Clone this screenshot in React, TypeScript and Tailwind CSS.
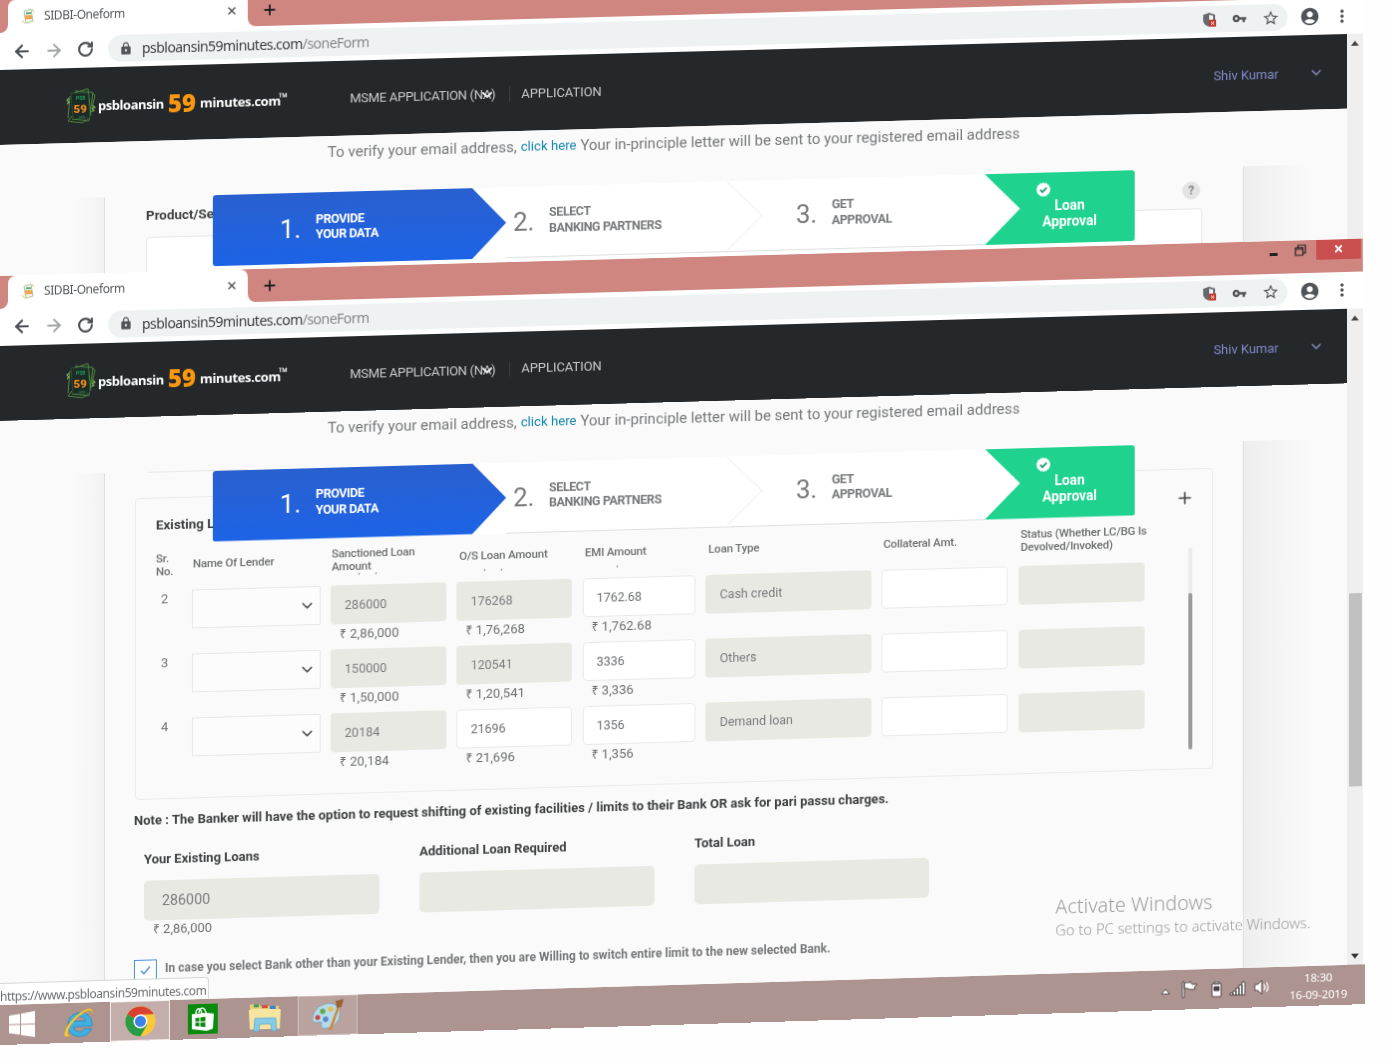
import React from "react";
import { ArrowLeft, ArrowRight, RotateCw, ChevronDown, Plus, X } from "lucide-react";
import { MdLock, MdVpnKey, MdStarOutline, MdAccountCircle, MdMoreVert } from "react-icons/md";

function NotesLogo({ className, small }: { className: string; small?: boolean }) {
  return small ? (
    <svg viewBox="0 0 14 16" className={className} fill="none">
      <path d="M3 3l7-2 2 12-7 2z" fill="#f3f6ee" stroke="#a9c79a" />
      <path d="M1 12l3 3M11 1l2 3" stroke="#d8c25a" />
      <path d="M5 4h5v2H5z" fill="#5fae82" />
      <path d="M4 7h7v4H4z" fill="#f0a64e" />
    </svg>
  ) : (
    <svg viewBox="0 0 30 36" className={className} fill="none">
      <path d="M9 3l18 2-4 28-17-2M5 6L22 1l3 27M6 28l-4 5 14 2 6-3M4 8l-2 22M27 6l2 2-3 12" stroke="#4c8a3c" strokeWidth="1" />
      <path d="M5 5h17l2 25-17 1z" fill="#1c2b25" stroke="#2d5a3a" strokeWidth=".7" />
      <path d="M3 10l-2 2 2 2-2 2M27 18l2 2-3 1 2 2-3 1" stroke="#86b35a" strokeWidth="1.1" />
      <text x="10" y="12.500" fontSize="5" fontWeight="700" fontFamily="Roboto, sans-serif" fill="#1f9a5a">PSB</text>
      <text x="7.500" y="24.800" fontSize="11.500" fontWeight="900" fontFamily="Roboto, sans-serif" fill="#f08a1c">59</text>
      <path d="M13 29h6" stroke="#2e7a48" />
    </svg>
  );
}

function TitleBar() {
  return (
    <div className="flex h-[33px] shrink-0 bg-white">
      <div className="w-2 rounded-br-lg bg-[#cf8680]" />
      <div className="w-[240px] bg-[#cf8680]">
        <div className="flex h-full items-center rounded-t-lg bg-white pl-[13px] pr-2.5">
          <NotesLogo small className="h-4 w-[14px]" />
          <span className="ml-[9px] whitespace-nowrap font-['Noto_Sans'] text-[12px] tracking-[-0.42px] text-[#55585c]">SIDBI-Oneform</span>
          <X className="ml-auto size-3 text-[#55585c]" strokeWidth={3} />
        </div>
      </div>
      <div className="flex flex-1 items-start rounded-bl-lg bg-[#cf8680] pl-[14px]">
        <Plus className="mt-[9px] size-4 text-[#222]" strokeWidth={2.8} />
        <div className="ml-auto flex h-5 items-center">
          <div className="mt-2 h-[3px] w-2 bg-[#222]" />
          <svg viewBox="0 0 12 12" className="ml-[17px] size-3" fill="none" stroke="#222" strokeWidth="1.2">
            <path d="M3.500 3V1H11v8H9M1 3.500h7.500V11H1zM1 5h7.500" />
          </svg>
          <div className="ml-[10px] mr-0.5 flex h-5 w-[45px] items-center justify-center bg-[#c94e4e]">
            <X className="size-[11px] text-white" strokeWidth={4} />
          </div>
        </div>
      </div>
    </div>
  );
}

function Toolbar() {
  return (
    <div className="flex h-[37px] shrink-0 items-center bg-white pl-3">
      <ArrowLeft className="size-5 text-[#4c4f53]" strokeWidth={2.6} />
      <ArrowRight className="ml-3 size-5 text-[#a4a6a8]" strokeWidth={2.4} />
      <RotateCw className="ml-[13px] size-[17px] text-[#4c4f53]" strokeWidth={3} />
      <div className="ml-[14px] flex h-[27px] w-[1185px] items-center rounded-full bg-[#eff2f3] pl-[11px] pr-2">
        <MdLock className="size-[14px] text-[#505357]" />
        <span className="ml-[9px] whitespace-nowrap font-['Noto_Sans'] text-[14px] tracking-[-0.54px] text-[#3c4043]">
          psbloansin59minutes.com<span className="text-[#85888c]">/soneForm</span>
        </span>
        <svg viewBox="0 0 16 16" className="ml-auto size-4">
          <path d="M7 1l6 2v5c0 4-3 6-6 7-3-1-6-3-6-7V3z" fill="#66696d" />
          <path d="M7 3l4 1v5H7z" fill="#f1f3f4" />
          <path d="M7 8h7v7H7z" fill="#c73a31" />
          <path d="M9 10l3 3m0-3l-3 3" stroke="#fff" />
        </svg>
        <MdVpnKey className="ml-[14px] size-[15px] text-[#55585c]" />
        <MdStarOutline className="ml-[15px] size-[18px] text-[#55585c]" />
      </div>
      <MdAccountCircle className="ml-[12px] size-[21px] text-[#505357]" />
      <MdMoreVert className="ml-3 size-5 text-[#505357]" />
    </div>
  );
}

function Nav() {
  return (
    <div className="flex h-[75px] shrink-0 items-center bg-[#25282a] text-white">
      <NotesLogo className="ml-[66px] h-9 w-[30px]" />
      <div className="ml-[2px] flex h-8 items-center whitespace-nowrap font-['Open_Sans'] font-bold">
        <span className="w-[70px] pt-[3px] text-[13px] tracking-[-0.45px]">psbloansin</span>
        <span className="w-[32px] font-['Noto_Sans'] text-[24px] font-black text-[#f9980f]">59</span>
        <span className="w-[79px] pt-[3px] text-[13px] tracking-[-0.35px]">minutes.com</span>
        <span className="mb-1.5 text-[12px]">™</span>
      </div>
      <div className="relative ml-[62px] w-[151px] whitespace-nowrap pt-px text-[13px] tracking-[-0.3px] text-[#c9cacb]">
        MSME APPLICATION (NA)
        <ChevronDown className="absolute left-[130px] top-[3px] size-4 text-[#e8e8e8]" strokeWidth={3} />
      </div>
      <div className="ml-[9px] h-4 w-px bg-[#3a3d40]" />
      <div className="ml-[11px] text-[13px] tracking-[-0.05px] text-[#c9cacb]">APPLICATION</div>
      <div className="ml-auto pt-0.5 text-[13px] text-[#8089c9]">Shiv Kumar</div>
      <ChevronDown className="ml-[30px] mr-[23px] size-4 text-[#8c92c4]" strokeWidth={2} />
    </div>
  );
}

function VerifyLine() {
  return (
    <div className="flex items-center whitespace-nowrap pl-[328px] pt-[4px] text-[15px] leading-[24px] text-[#757779]">
      <span>To verify your email address,</span>
      <span className="ml-1 text-[13.2px] text-[#1287ad]">click here</span>
      <span className="ml-1">Your in-principle letter will be sent to your registered email address</span>
    </div>
  );
}

function Step({ n, a, b, className }: { n: string; a: string; b: string; className: string }) {
  return (
    <div className={className}>
      <span className="w-9 text-[26px] leading-none">{n}</span>
      <span className="whitespace-nowrap pb-[3px] text-[12.5px] font-bold leading-[15.5px] tracking-[-0.42px]">
        {a}
        <br />
        {b}
      </span>
    </div>
  );
}

function Steps() {
  return (
    <div className="absolute left-[213px] top-[56px] z-10 flex h-[71px] w-[926px] overflow-hidden rounded-[3px]">
      <div className="flex w-[294px] bg-white">
        <Step
          n="1."
          a="PROVIDE"
          b="YOUR DATA"
          className="flex w-[294px] items-center bg-gradient-to-b from-[#2960cf] to-[#1c63e6] pl-[67px] text-white [clip-path:polygon(0_0,88.4%_0,100%_50%,88.4%_100%,0_100%)]"
        />
      </div>
      <div className="flex w-[258px] border-b border-[#dfe0e2] bg-white">
        <Step n="2." a="SELECT" b="BANKING PARTNERS" className="flex w-[222px] items-center pl-[7px] text-[#77797b]" />
        <svg viewBox="0 0 37 70" className="h-[70px] w-9" fill="none" stroke="#e8e9ea">
          <path d="M0 0l36 35L0 70" />
        </svg>
      </div>
      <div className="flex w-[223px] border-b border-[#dfe0e2] bg-white">
        <Step n="3." a="GET" b="APPROVAL" className="flex items-center pl-[33px] text-[#77797b]" />
      </div>
      <div className="flex w-[151px] bg-white">
        <div className="flex w-[151px] flex-col items-center bg-[#1fd38f] pl-5 pt-[9px] text-center text-[13.8px] font-bold leading-4 text-white [clip-path:polygon(0_0,100%_0,100%_100%,0_100%,23.5%_50%)]">
          <svg viewBox="0 0 16 16" className="mr-[54px] size-4 shrink-0">
            <circle cx="8" cy="8" r="6.600" fill="#fff" stroke="#fff" strokeWidth="1" strokeDasharray="2 1" />
            <path d="M4.800 8.200l2.300 2.300 4.200-4.300" fill="none" stroke="#259a6e" strokeWidth="1.900" />
          </svg>
          <span>Loan</span>
          <span>Approval</span>
        </div>
      </div>
    </div>
  );
}

function PageScroll({ thumb }: { thumb?: boolean }) {
  return (
    <div className="flex w-4 shrink-0 flex-col items-center bg-[#efefef]">
      <svg viewBox="0 0 8 5" className="mt-[7px] h-[5px] w-2 shrink-0">
        <path d="M0 5l4-5 4 5z" fill="#444" />
      </svg>
      {thumb && (
        <>
          <div className="mt-[274px] h-[194px] w-[13px] bg-[#c1c1c1]" />
          <svg viewBox="0 0 8 5" className="mb-1.5 mt-auto h-[5px] w-2 shrink-0">
            <path d="M0 0l4 5 4-5z" fill="#333" />
          </svg>
        </>
      )}
    </div>
  );
}

function BrowserWindow({ className, thumb, children }: { className: string; thumb?: boolean; children: React.ReactNode }) {
  return (
    <div className={className}>
      <TitleBar />
      <Toolbar />
      <div className="flex min-h-0 flex-1">
        <div className="flex min-w-0 flex-1 flex-col">
          <Nav />
          <div className="relative flex min-h-0 flex-1 flex-col bg-[#fafafa]">
            <VerifyLine />
            <Steps />
            <div className="mt-[27px] flex min-h-0 flex-1">
              <div className="w-[105px] shrink-0 border-r border-[#dedfdf] bg-gradient-to-r from-[#fafafa] from-70% to-[#f3f3f3]" />
              <div className="min-w-0 flex-1">{children}</div>
              <div className="w-[105px] shrink-0 border-l border-[#dedfdf] bg-gradient-to-r from-[#eeeeee] to-[#fafafa] to-65%" />
            </div>
          </div>
        </div>
        <PageScroll thumb={thumb} />
      </div>
    </div>
  );
}

const GREY = "flex h-[38.5px] items-center rounded-[4px] bg-[#e9e9e4] pl-3.5 pt-0.5 text-[12.5px] text-[#7a7c7c]";
const WHITE = "flex h-[38.5px] items-center rounded-[4px] border border-[#e8eaea] bg-white pl-[13px] pt-0.5 text-[12.5px] text-[#6c6e70]";

function Amount({ value, words, editable }: { value: string; words: string; editable?: boolean }) {
  return (
    <div>
      <div className={editable ? WHITE : GREY}>{value}</div>
      <div className="whitespace-nowrap pl-[9px] pt-px text-[13px] leading-[17px] tracking-[0.04px] text-[#6c6e70]">
        <span className="font-['Noto_Sans'] text-[12px]">₹</span> {words}
      </div>
    </div>
  );
}

const LOANS = [
  { n: 2, s: "286000", sw: "2,86,000", o: "176268", ow: "1,76,268", e: "1762.68", ew: "1,762.68", t: "Cash credit", edit: false },
  { n: 3, s: "150000", sw: "1,50,000", o: "120541", ow: "1,20,541", e: "3336", ew: "3,336", t: "Others", edit: false },
  { n: 4, s: "20184", sw: "20,184", o: "21696", ow: "21,696", e: "1356", ew: "1,356", t: "Demand loan", edit: true },
];

function Tick({ className }: { className: string }) {
  return <i className={className + " h-[2px] w-px rotate-[30deg] bg-[#777]"} />;
}

function LoanTable() {
  return (
    <div className="ml-[30px] mt-[25.5px] h-[302px] w-[1083px] rounded-[4px] border border-[#e9eaea] pl-5">
      <div className="flex h-[53px] justify-between pr-[18px] pt-[18px]">
        <b className="text-[13.4px] font-bold leading-[18px] text-[#3d3f40]">Existing Loans</b>
        <Plus className="mt-px size-[19px] text-[#3c3e3f]" />
      </div>
      <div className="flex">
        <div className="w-[995px]">
          <div className="grid h-[27px] grid-cols-[37px_139px_128px_126px_124px_176px_138px_134px] items-center whitespace-nowrap text-[11.5px] font-medium leading-[13px] tracking-[-0.17px] text-[#6d6f70]">
            <span>Sr.<br />No.</span>
            <span>Name Of Lender</span>
            <span>Sanctioned Loan<br />Amount</span>
            <span>O/S Loan Amount</span>
            <span>EMI Amount</span>
            <span>Loan Type</span>
            <span>Collateral Amt.</span>
            <span>Status (Whether LC/BG Is<br />Devolved/Invoked)</span>
          </div>
          <div className="flex h-3 pl-[202px]">
            <Tick className="ml-px" />
            <Tick className="ml-4" />
            <Tick className="ml-[108px]" />
            <Tick className="ml-4" />
            <Tick className="ml-[115px]" />
          </div>
          {LOANS.map((r) => (
            <div key={r.n} className="grid h-16 grid-cols-[26px_128.5px_116px_116px_113.5px_166.5px_127px_127px] gap-x-[10.3px]">
              <span className="pl-[5px] text-[13px] leading-[18px] text-[#707273]">{r.n}</span>
              <div className="flex h-[38.5px] items-center justify-end border border-[#e6e7e7] bg-[#fcfcfc] pr-1">
                <ChevronDown className="size-[17px] text-[#555]" strokeWidth={2} />
              </div>
              <Amount value={r.s} words={r.sw} />
              <Amount value={r.o} words={r.ow} editable={r.edit} />
              <Amount value={r.e} words={r.ew} editable />
              <div className={GREY}>{r.t}</div>
              <div className={WHITE} />
              <div className={GREY} />
            </div>
          ))}
        </div>
        <div className="ml-[42px] mt-[26px] h-[202px] w-1 bg-[#ececec]">
          <div className="mt-[45px] h-[157px] w-1 rounded-full bg-[#999a9b]" />
        </div>
      </div>
    </div>
  );
}

function Total({ label, value, words }: { label: string; value?: string; words?: string }) {
  return (
    <div className="w-[236px] text-[13px] text-[#6c6e70]">
      <b className="block whitespace-nowrap leading-4 tracking-[0.02px] text-[#3f4142]">{label}</b>
      <div className="mt-[13px] flex h-10 items-center rounded-[5px] bg-[#e9e9e4] pl-[18px] pt-0.5 text-[14.3px] text-[#7a7c7c]">{value}</div>
      {words && (
        <div className="pl-[9px] leading-[17px]">
          <span className="font-['Noto_Sans'] text-[12px]">₹</span> {words}
        </div>
      )}
    </div>
  );
}

function Taskbar() {
  return (
    <div className="flex h-10 w-[1371px] items-center bg-[#ae9490]">
      <svg viewBox="0 0 26 26" className="ml-[9px] size-[26px]" fill="#fff">
        <path d="M0 4l11-1.500v10H0zM12 2.300L26 0v12.500H12zM0 13.500h11v9.700L0 21.500zM12 13.500h14V26l-14-2.300z" />
      </svg>
      <svg viewBox="0 0 32 32" className="ml-[28px] size-8">
        <path fillRule="evenodd" d="M29 20H11c.5 6 8 6.500 10.500 2.500h7C25 33 5 33 5 18 5 2 29 2 29 18zM11.500 14.500h11c-.8-6-10-6-11 0z" fill="#3fb0e2" stroke="#1f86bd" strokeWidth=".7" />
        <path d="M29.500 8c1-4-1-6.500-5-5.500C15 5 3 18 1.500 26c-.7 4 2 5 6.500 2.500-4 .5-4-3-2-7C9 15 18 6.500 25 4.500c3-.8 4.500.5 4.500 3.500z" fill="#f5cb42" stroke="#d09d20" strokeWidth=".5" />
      </svg>
      <div className="ml-[15px] flex h-10 w-[60px] items-center justify-center border border-[#f3ebe9] bg-[#c3aeab]">
        <svg viewBox="0 0 32 32" className="size-[31px]">
          <circle cx="16" cy="16" r="15.500" fill="#fbc936" />
          <path d="M16 16L2.600 8.200A15.500 15.500 0 0 0 16 31.500l7-12z" fill="#2c9b47" />
          <path d="M16 16L2.600 8.200A15.500 15.500 0 0 1 29.600 9H16z" fill="#d9402f" />
          <circle cx="16" cy="16" r="7.200" fill="#fff" />
          <circle cx="16" cy="16" r="5.700" fill="#3f7fe8" />
        </svg>
      </div>
      <svg viewBox="0 0 30 30" className="ml-[18px] size-[30px]">
        <path d="M0 0h30v30H0z" fill="#0b8a10" />
        <path d="M4 10l15-1 7 1-1 15-6 2-15-2z" fill="#fff" />
        <path d="M8 10c0-7 5-7 6 0M11 9c1-7 6-6 7 0" fill="none" stroke="#fff" strokeWidth="1.300" />
        <path d="M7.500 14l4-.5v4h-4zM12.500 13.400l5-.6v4.700h-5zM7.500 18.500h4v4l-4-.5zM12.500 18.500h5v4.700l-5-.6z" fill="#0b8a10" />
      </svg>
      <svg viewBox="0 0 32 30" className="ml-[31px] h-[30px] w-8">
        <path d="M1 2h9l2 2h18v23H1z" fill="#e8ce79" />
        <path d="M5 2h5v3H5z" fill="#3ea35a" />
        <path d="M13 3h6v3h-6z" fill="#d2503f" />
        <path d="M21 4h6v3h-6z" fill="#3b84c8" />
        <path d="M0 7h32l-1 20H1z" fill="#f6e5a0" />
        <path d="M5 29l1-13h21l1 13h-5l-1-7H11l-1 7z" fill="#86cbe6" stroke="#5aa7cc" strokeWidth=".7" />
      </svg>
      <div className="ml-[17px] flex h-10 w-[60px] items-center justify-center border border-[#d3c4c1] bg-[#baa29e]">
        <svg viewBox="0 0 34 32" className="h-8 w-[34px]">
          <path d="M2 21C1 9 14 2 23 5c9 3 8 17-1 22-8 4-13 2-11-3 1-3-8 1-9-3z" fill="#b5daea" stroke="#6f9fb5" strokeWidth=".7" />
          <circle cx="7" cy="18" r="2.500" fill="#c34a44" />
          <circle cx="12" cy="12" r="2.700" fill="#62a94b" />
          <circle cx="20" cy="10" r="2.600" fill="#e9be45" />
          <circle cx="15" cy="20" r="2.700" fill="#5588c5" />
          <path d="M18 31l9-24 2 1-8 23z" fill="#cf8938" />
          <path d="M25 2l8-2-2 8-5 1z" fill="#9a6335" />
        </svg>
      </div>
      <svg viewBox="0 0 112 18" className="ml-auto h-[18px] w-[112px]" fill="#fff" stroke="#4a3f3e" strokeWidth=".9">
        <path d="M1 13l4-5 4 5z" />
        <path d="M22 1h2v16h-2zM24 2h7l1 2h5l-3 3 1 2h-6l-1-1h-4z" />
        <path d="M54 2h5v2h-5zM52 4h9v13h-9z" />
        <path d="M54 7h5v4h-5z" fill="#4a3f3e" />
        <path d="M70 14h3v2h-3zM73 12h3v4h-3zM76 9h3v7h-3zM79 6h3v10h-3zM82 3h3v13h-3z" />
        <path d="M95 6h3l4-4v14l-4-4h-3z" />
        <path d="M104 6q2 3 0 6M106.500 4q3.500 5 0 10" fill="none" stroke="#fff" strokeWidth="1.200" />
      </svg>
      <div className="ml-[14px] mr-[14px] w-[66px] text-center font-['Noto_Sans'] text-[11.5px] leading-[17px] tracking-[-0.2px] text-white">
        18:30
        <br />
        16-09-2019
      </div>
    </div>
  );
}

export default function App() {
  return (
    <div className="h-[1060px] w-[1391px] overflow-hidden bg-[#fefefe] font-['Roboto',sans-serif]">
      <div className="relative h-[1045px] w-[1371px] origin-top-left [transform:matrix3d(1,-0.0265,0,0.0000033,0,1,0,0,0,0,1,0,0,0,0,1)]">
        <BrowserWindow className="flex h-[275.5px] w-[1369px] flex-col overflow-hidden">
          <div className="relative pl-[41px]">
            <div className="flex h-[41px] items-center justify-between pr-[43px]">
              <b className="text-[13.4px] text-[#3d3f40]">Product/Services</b>
              <span className="mt-1 flex size-[18px] items-center justify-center rounded-full bg-[#e3e3e3] text-[12px] font-bold text-[#858585]">?</span>
            </div>
            <div className="h-20 w-[1061px] rounded-t-[4px] border border-[#e5e6e6] bg-white" />
          </div>
        </BrowserWindow>
        <BrowserWindow thumb className="flex h-[729.5px] w-[1371px] flex-col overflow-hidden pr-0.5">
          <div className="ml-[43px] h-px w-[100px] bg-[#e6e7e7]" />
          <LoanTable />
          <b className="mt-[12px] block whitespace-nowrap pl-[29px] text-[13px] leading-[18px] tracking-[0.035px] text-[#3d3f40]">
            Note : The Banker will have the option to request shifting of existing facilities / limits to their Bank OR ask for pari passu charges.
          </b>
          <div className="mt-[22px] flex h-[88px] gap-10 pl-[39px]">
            <Total label="Your Existing Loans" value="286000" words="2,86,000" />
            <Total label="Additional Loan Required" />
            <Total label="Total Loan" />
          </div>
          <div className="mt-[19.5px] flex pl-[29px]">
            <div className="flex size-[23px] items-center justify-center border border-[#4b8fdc] bg-white">
              <svg viewBox="0 0 12 10" className="h-2.5 w-3" fill="none" stroke="#4b8fdc" strokeWidth="1.500">
                <path d="M1 5l3 3 6-7" />
              </svg>
            </div>
            <b className="ml-[8px] whitespace-nowrap text-[12px] leading-[19px] tracking-[0.03px] text-[#757779]">
              In case you select Bank other than your Existing Lender, then you are Willing to switch entire limit to the new selected Bank.
            </b>
          </div>
        </BrowserWindow>
        <Taskbar />
        <div className="absolute left-0 top-[983px] z-20 flex h-[22px] w-[209px] items-center whitespace-nowrap rounded-tr-[4px] border-r border-t border-[#d4d5d5] bg-white pt-1 font-['Noto_Sans'] text-[12px] tracking-[-0.41px] text-[#6b6d70]">
          https://www.psbloansin59minutes.com
        </div>
        <div className="absolute left-[1059px] top-[925px] z-20 whitespace-nowrap font-['Noto_Sans'] font-light text-[#9fa0a0]">
          <div className="text-[20px] leading-[26px]">Activate Windows</div>
          <div className="text-[14.8px] leading-[20px]">Go to PC settings to activate Windows.</div>
        </div>
      </div>
    </div>
  );
}
